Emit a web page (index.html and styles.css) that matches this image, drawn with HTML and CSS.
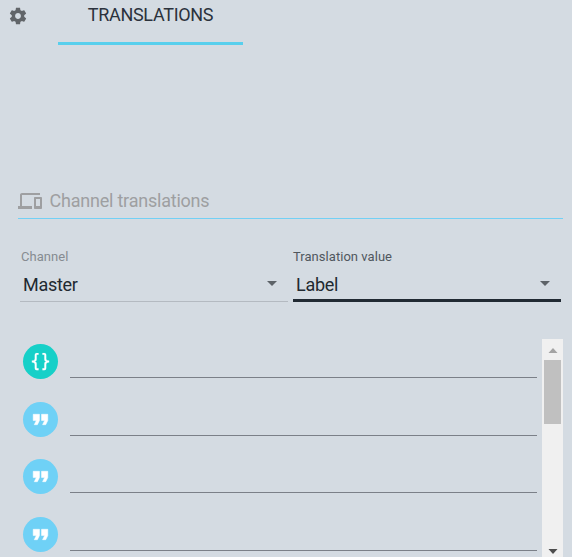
FILE: index.html
```html
<!DOCTYPE html>
<html lang="en">
<head>
<meta charset="utf-8">
<title>Translations</title>
<link rel="stylesheet" href="styles.css">
</head>
<body>
<svg class="defs" width="0" height="0">
  <symbol id="quote" viewBox="0 0 24 24"><path d="M14 17h3l2-4V7h-6v6h3l-2 4zM6 17h3l2-4V7H5v6h3z"/></symbol>
</svg>
<main class="panel">
  <nav class="tabs">
    <svg class="gear" viewBox="0 0 24 24"><path d="M19.43 12.98c.04-.32.07-.64.07-.98s-.03-.66-.07-.98l2.11-1.65c.19-.15.24-.42.12-.64l-2-3.46c-.12-.22-.39-.3-.61-.22l-2.49 1c-.52-.4-1.08-.73-1.69-.98l-.38-2.65C14.46 2.18 14.25 2 14 2h-4c-.25 0-.46.18-.49.42l-.38 2.65c-.61.25-1.17.59-1.69.98l-2.49-1c-.23-.09-.49 0-.61.22l-2 3.46c-.13.22-.07.49.12.64l2.11 1.65c-.04.32-.07.65-.07.98s.03.66.07.98l-2.11 1.65c-.19.15-.24.42-.12.64l2 3.46c.12.22.39.3.61.22l2.49-1c.52.4 1.08.73 1.69.98l.38 2.65c.03.24.24.42.49.42h4c.25 0 .46-.18.49-.42l.38-2.65c.61-.25 1.17-.59 1.69-.98l2.49 1c.23.09.49 0 .61-.22l2-3.46c.12-.22.07-.49-.12-.64l-2.11-1.65zM12 15.5c-1.93 0-3.5-1.57-3.5-3.5s1.57-3.5 3.5-3.5 3.5 1.57 3.5 3.5-1.57 3.5-3.5 3.5z"/></svg>
    <div class="tab">TRANSLATIONS</div>
  </nav>
  <header class="section">
    <svg class="devices" viewBox="0 0 24 24"><path d="M4 6h18V4H4c-1.1 0-2 .9-2 2v11H0v3h14v-3H4V6zm19 2h-6c-.55 0-1 .45-1 1v10c0 .55.45 1 1 1h6c.55 0 1-.45 1-1V9c0-.55-.45-1-1-1zm-1 9h-4v-7h4v7z"/></svg>
    <span class="section-title">Channel translations</span>
  </header>
  <div class="fields">
    <div class="field">
      <div class="label">Channel</div>
      <div class="value"><span>Master</span><i class="caret"></i></div>
    </div>
    <div class="field active">
      <div class="label">Translation value</div>
      <div class="value"><span>Label</span><i class="caret"></i></div>
    </div>
  </div>
  <section class="list">
    <div class="rows">
      <div class="row"><span class="badge code"><svg viewBox="0 0 24 24"><path d="M8 3a2 2 0 0 0-2 2v4a2 2 0 0 1-2 2H3v2h1a2 2 0 0 1 2 2v4a2 2 0 0 0 2 2h2v-2H8v-5a2 2 0 0 0-2-2 2 2 0 0 0 2-2V5h2V3M16 3a2 2 0 0 1 2 2v4a2 2 0 0 0 2 2h1v2h-1a2 2 0 0 0-2 2v4a2 2 0 0 1-2 2h-2v-2h2v-5a2 2 0 0 1 2-2 2 2 0 0 1-2-2V5h-2V3z"/></svg></span><span class="line"></span></div>
      <div class="row"><span class="badge"><svg><use href="#quote"/></svg></span><span class="line"></span></div>
      <div class="row"><span class="badge"><svg><use href="#quote"/></svg></span><span class="line"></span></div>
      <div class="row"><span class="badge"><svg><use href="#quote"/></svg></span><span class="line"></span></div>
    </div>
    <div class="scrollbar">
      <svg class="arrow up" viewBox="0 0 9 5"><path d="M0 5h9L4.500 0z"/></svg>
      <div class="thumb"></div>
      <svg class="arrow down" viewBox="0 0 9 5"><path d="M0 0h9L4.500 5z"/></svg>
    </div>
  </section>
</main>
</body>
</html>
```
FILE: styles.css
```css
* { box-sizing: border-box; }
body {
  margin: 0;
  background: #d4dbe2;
  color: #212930;
  font: 18px/24px Roboto, sans-serif;
  overflow: hidden;
}
svg { display: block; flex: none; }
.defs { position: absolute; }
.panel { height: 557px; display: flex; flex-direction: column; }
.tabs { display: flex; height: 45px; flex: none; padding-left: 8px; }
.gear { width: 20px; height: 20px; margin: 5.500px 30px 0 0; fill: #616569; }
.tab {
  width: 185px;
  padding-top: 3px;
  text-align: center;
  color: #2b323c;
  letter-spacing: -0.3px;
  border-bottom: 3px solid #58cfed;
}
.section {
  display: flex;
  align-items: flex-start;
  height: 30px;
  flex: none;
  margin: 144px 9px 0 18px;
  border-bottom: 1px solid #72d0f5;
  color: #9e9fa1;
}
.devices { width: 24px; height: 24px; fill: #9e9fa1; }
.section-title { margin-left: 7.500px; letter-spacing: -0.22px; }
.fields { display: flex; gap: 5px; padding: 28px 0 0 20px; height: 120px; flex: none; }
.field { width: 268px; }
.label { font-size: 13px; line-height: 20px; letter-spacing: .04px; color: #868b91; padding-left: 1px; }
.value {
  display: flex;
  align-items: center;
  justify-content: space-between;
  height: 35px;
  padding: 5px 11px 4px 3px;
  letter-spacing: -0.3px;
  border-bottom: 1px solid #b4bac1;
}
.active .label { color: #50575e; padding-left: 0; }
.active .value { border-bottom: 3px solid #212a33; padding-bottom: 2px; }
.caret {
  margin-bottom: 3px;
  border: 5.500px solid transparent;
  border-top: 5px solid #5d6368;
  border-bottom: 0;
}
.list { display: flex; height: 218px; flex: none; }
.rows { width: 542px; padding: 5px 5px 0 23px; }
.row { height: 57.670px; display: flex; }
.badge {
  width: 35px;
  height: 35px;
  margin-right: 12px;
  border-radius: 50%;
  background: #6fd1f6;
  display: flex;
  align-items: center;
  justify-content: center;
}
.badge svg { width: 25px; height: 25px; fill: #fff; stroke: #fff; stroke-width: .5px; }
.badge.code { background: #16d0c8; }
.badge.code svg { width: 23px; height: 23px; stroke-width: .1px; }
.line { flex: 1; height: 34px; border-bottom: 1px solid #7b8088; }
.scrollbar {
  width: 21px;
  background: #f0f0f0;
  display: flex;
  flex-direction: column;
  align-items: center;
}
.arrow { width: 10px; height: 5px; }
.up { margin-top: 9px; fill: #a3a3a3; }
.down { margin: auto 0 3px; fill: #4d4d4d; }
.thumb { width: 17px; height: 64px; margin-top: 7px; background: #c0c0c0; }
```
